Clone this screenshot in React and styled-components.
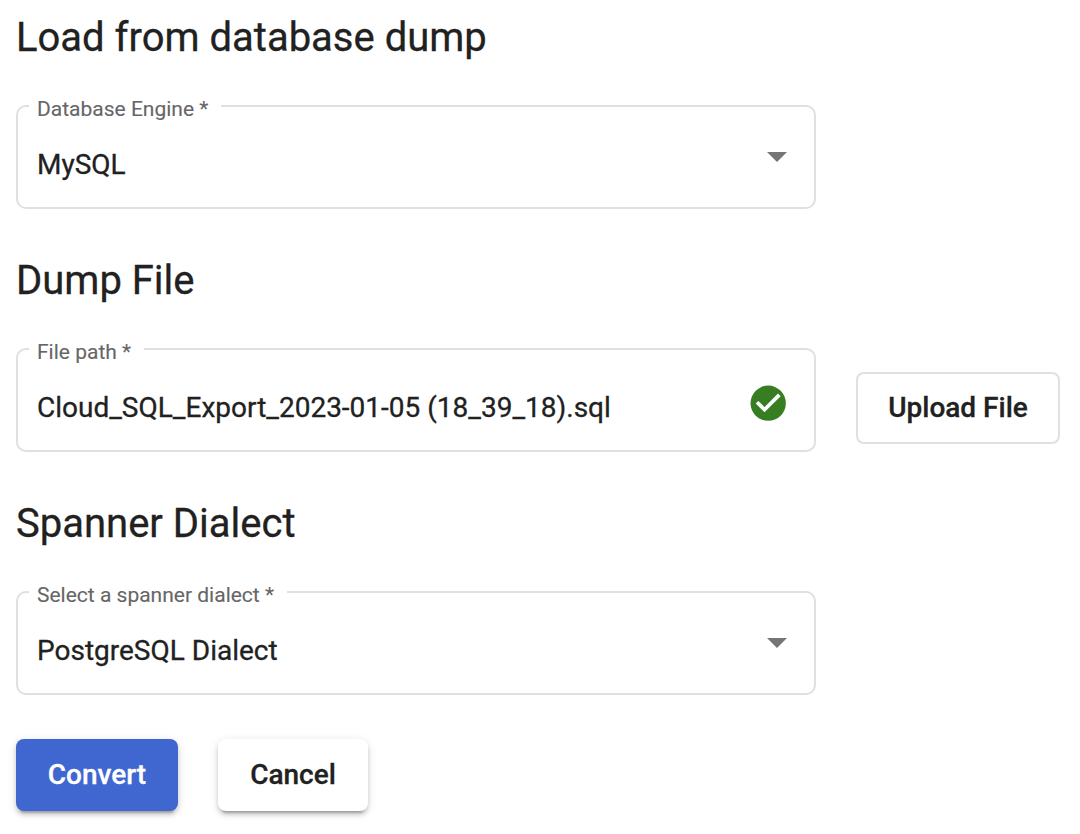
import React from "react";
import styled, { createGlobalStyle, css } from "styled-components";

const GlobalStyle = createGlobalStyle`
  * { box-sizing: border-box; }
  body {
    margin: 0;
    background: #fff;
    color: #212121;
    font-family: Roboto, sans-serif;
    -webkit-text-stroke: 0.3px currentColor;
  }
`;

const Page = styled.main`
  width: 1080px;
  height: 834px;
  padding: 6px 16px 0;
  overflow: hidden;
`;

const Section = styled.section`
  height: 243px;
`;

const Title = styled.h3`
  margin: 0 0 35px;
  height: 64px;
  line-height: 64px;
  font-size: 40px;
  font-weight: 400;
  white-space: nowrap;
`;

const Row = styled.div`
  display: flex;
  align-items: flex-start;
  gap: 40px;
`;

const Actions = styled(Row)`
  padding-top: 4px;
`;

const Field = styled.div`
  position: relative;
  display: flex;
  align-items: flex-start;
  justify-content: space-between;
  width: 800px;
  height: 104px;
  padding: 0 27px 0 19px;
  border: 2px solid #e0e0e0;
  border-radius: 10px;
`;

const Label = styled.label`
  position: absolute;
  top: -11px;
  left: 11px;
  padding: 0 13px 0 8px;
  background: #fff;
  color: #666;
  font-size: 21px;
  line-height: 26px;
  white-space: nowrap;
  -webkit-text-stroke-width: 0.1px;
`;

const Value = styled.span`
  margin-top: 41px;
  font-size: 28px;
  line-height: 34px;
  white-space: nowrap;
`;

const Arrow = styled.svg`
  display: block;
  width: 20px;
  height: 10px;
  margin-top: 45px;
  fill: #757575;
`;

const Check = styled.svg`
  display: block;
  width: 42.4px;
  height: 42.4px;
  margin: 32px -2px 0 0;
`;

const Button = styled.button`
  width: ${(p) => p.$width}px;
  height: 72px;
  padding: 0;
  border: 0;
  border-radius: 8px;
  background: #fff;
  color: #212121;
  font: 500 28px/34px Roboto, sans-serif;
  white-space: nowrap;
  -webkit-text-stroke: 0.3px currentColor;
  ${(p) =>
    p.$outlined
      ? css`
          margin-top: 24px;
          border: 2px solid #e0e0e0;
        `
      : css`
          box-shadow: 0 6px 2px -4px rgba(0, 0, 0, 0.2),
            0 4px 4px 0 rgba(0, 0, 0, 0.14), 0 2px 10px 0 rgba(0, 0, 0, 0.12);
        `}
  ${(p) =>
    p.$primary &&
    css`
      background: #4067d0;
      color: #fff;
    `}
`;

function DropdownArrow() {
  return (
    <Arrow viewBox="0 0 20 10">
      <path d="M0 0h20L10 10z" />
    </Arrow>
  );
}

function CheckCircle() {
  return (
    <Check viewBox="0 0 24 24">
      <circle cx="12" cy="12" r="10" fill="#377e22" />
      <path
        d="M5.7 11.5L9.9 15.7L18.3 7.3"
        fill="none"
        stroke="#fff"
        strokeWidth="2.1"
      />
    </Check>
  );
}

function FormField({ label, value, icon }) {
  return (
    <Field>
      <Label>{label}</Label>
      <Value>{value}</Value>
      {icon}
    </Field>
  );
}

export default function App() {
  return (
    <>
      <GlobalStyle />
      <Page>
        <Section>
          <Title>Load from database dump</Title>
          <FormField label="Database Engine *" value="MySQL" icon={<DropdownArrow />} />
        </Section>
        <Section>
          <Title>Dump File</Title>
          <Row>
            <FormField
              label="File path *"
              value="Cloud_SQL_Export_2023-01-05 (18_39_18).sql"
              icon={<CheckCircle />}
            />
            <Button $outlined $width={204}>Upload File</Button>
          </Row>
        </Section>
        <Section>
          <Title>Spanner Dialect</Title>
          <FormField
            label="Select a spanner dialect *"
            value="PostgreSQL Dialect"
            icon={<DropdownArrow />}
          />
        </Section>
        <Actions>
          <Button $primary $width={162}>Convert</Button>
          <Button $width={150}>Cancel</Button>
        </Actions>
      </Page>
    </>
  );
}
